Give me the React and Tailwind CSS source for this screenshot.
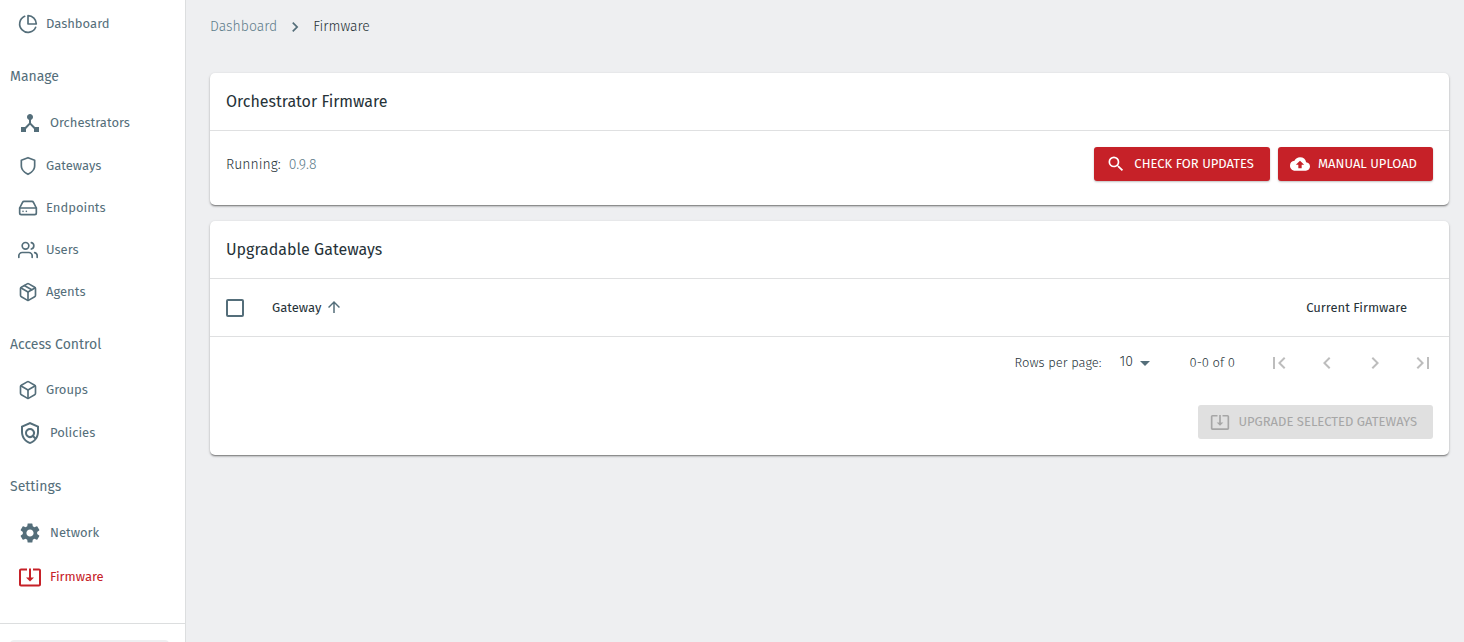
import {
  FiPieChart, FiShield, FiHardDrive, FiUsers, FiPackage, FiBox,
} from "react-icons/fi";
import {
  MdDeviceHub, MdOutlinePolicy, MdSettings, MdSystemUpdateAlt, MdSearch,
  MdCloudUpload, MdFirstPage, MdChevronLeft, MdChevronRight, MdLastPage,
  MdArrowDropDown, MdArrowUpward,
} from "react-icons/md";

const sections = [
  { items: [{ label: "Dashboard", icon: FiPieChart }] },
  {
    title: "Manage",
    items: [
      { label: "Orchestrators", icon: MdDeviceHub, large: true },
      { label: "Gateways", icon: FiShield },
      { label: "Endpoints", icon: FiHardDrive },
      { label: "Users", icon: FiUsers },
      { label: "Agents", icon: FiPackage },
    ],
  },
  {
    title: "Access Control",
    items: [
      { label: "Groups", icon: FiBox },
      { label: "Policies", icon: MdOutlinePolicy, large: true },
    ],
  },
  {
    title: "Settings",
    items: [
      { label: "Network", icon: MdSettings, large: true },
      { label: "Firmware", icon: MdSystemUpdateAlt, large: true, active: true },
    ],
  },
];

function NavItem({ label, icon: Icon, large, active }) {
  return (
    <li>
      <a
        href="#"
        aria-current={active ? "page" : undefined}
        className={`flex items-center gap-2 pl-[18px] text-[13px] leading-5 ${large ? "h-11" : "h-[42px]"} ${active ? "text-[#c62128]" : "text-[#546e7a]"}`}
      >
        <Icon className={large ? "size-6" : "size-5"} />
        {label}
      </a>
    </li>
  );
}

function Sidebar() {
  return (
    <aside className="w-[186px] shrink-0 border-r border-[#dcdedf] bg-white pt-[3px]">
      <nav>
        {sections.map((section, i) => (
          <div key={i}>
            {section.title && (
              <h2 className="pt-5 pb-3 pl-[10px] text-sm leading-6 text-[#546e7a]">{section.title}</h2>
            )}
            <ul>
              {section.items.map((item) => (
                <NavItem key={item.label} {...item} />
              ))}
            </ul>
          </div>
        ))}
      </nav>
      <div className="mt-6 border-t border-[#dcdedf] px-[10px] pt-4">
        <div className="mr-1.5 h-10 rounded bg-[#eeeff1]" />
      </div>
    </aside>
  );
}

function Card({ title, children }) {
  return (
    <section className="rounded-[5px] bg-white shadow-[0_2px_2px_-1px_rgba(0,0,0,0.3),0_1px_1px_rgba(0,0,0,0.14),0_1px_3px_rgba(0,0,0,0.2)]">
      <h2 className="border-b border-[#dfe0e1] px-4 py-4 text-base leading-[25px] text-[#263238]">{title}</h2>
      {children}
    </section>
  );
}

function RedButton({ icon: Icon, children }) {
  return (
    <button
      type="button"
      className="flex h-[34px] items-center gap-2 rounded-[3px] bg-[#c62128] pr-4 pl-3 text-[13px] text-white uppercase shadow-[0_1px_2px_rgba(0,0,0,0.25)]"
    >
      <Icon className="size-5" />
      {children}
    </button>
  );
}

function PageButton({ label, icon: Icon }) {
  return (
    <button type="button" disabled aria-label={label} className="p-3 text-[#bdbdbd]">
      <Icon className="size-6" />
    </button>
  );
}

export default function App() {
  return (
    <div className="flex h-screen overflow-hidden bg-[#eeeff1] font-['Fira_Sans','Noto_Sans',sans-serif] text-[#263238]">
      <Sidebar />
      <main className="min-w-0 flex-1 pt-[15px] pr-[15px] pl-6">
        <nav aria-label="Breadcrumb" className="flex h-6 items-center gap-2 text-sm font-light">
          <a href="#" className="text-[#607d8b]">Dashboard</a>
          <MdChevronRight className="size-5 text-[#546e7a]" />
          <span>Firmware</span>
        </nav>

        <div className="mt-[34px] flex flex-col gap-4">
          <Card title="Orchestrator Firmware">
            <div className="flex items-start justify-between gap-4 px-4 pt-4 pb-[22px]">
              <p className="flex h-9 items-center gap-2 text-sm font-light">
                Running: <span className="text-[#607d8b]">0.9.8</span>
              </p>
              <div className="flex gap-2">
                <RedButton icon={MdSearch}>Check for updates</RedButton>
                <RedButton icon={MdCloudUpload}>Manual upload</RedButton>
              </div>
            </div>
          </Card>

          <Card title="Upgradable Gateways">
            <table className="w-full text-[13px]">
              <thead>
                <tr className="h-[57px] border-b border-[#dfe0e1]">
                  <th className="w-[62px] pt-0.5 pl-4 text-left">
                    <input
                      type="checkbox"
                      aria-label="Select all gateways"
                      className="block size-[18px] appearance-none rounded-xs border-2 border-[#546e7a]"
                    />
                  </th>
                  <th aria-sort="ascending" className="text-left font-normal">
                    <button type="button" className="flex items-center gap-1">
                      Gateway <MdArrowUpward className="size-[18px] text-[#546e7a]" />
                    </button>
                  </th>
                  <th className="pr-[42px] text-right font-normal">Current Firmware</th>
                </tr>
              </thead>
            </table>

            <div className="flex h-[52px] items-center justify-end pr-0.5 text-[13px] font-light">
              <label htmlFor="rows">Rows per page:</label>
              <div className="relative mr-8 ml-2.5">
                <select id="rows" defaultValue="10" className="block h-6 w-[46px] appearance-none pb-0.5 pl-2 text-sm">
                  <option>10</option>
                  <option>25</option>
                  <option>50</option>
                </select>
                <MdArrowDropDown className="pointer-events-none absolute top-0 right-0 size-6 text-[#546e7a]" />
              </div>
              <span className="mr-5">0-0 of 0</span>
              <PageButton label="First page" icon={MdFirstPage} />
              <PageButton label="Previous page" icon={MdChevronLeft} />
              <PageButton label="Next page" icon={MdChevronRight} />
              <PageButton label="Last page" icon={MdLastPage} />
            </div>

            <div className="flex justify-end p-4">
              <button
                type="button"
                disabled
                className="flex h-[34px] items-center gap-2 rounded-[3px] bg-[#e0e0e0] pr-4 pl-3 text-[13px] text-[#a6a6a6] uppercase"
              >
                <MdSystemUpdateAlt className="size-5" />
                Upgrade selected gateways
              </button>
            </div>
          </Card>
        </div>
      </main>
    </div>
  );
}
